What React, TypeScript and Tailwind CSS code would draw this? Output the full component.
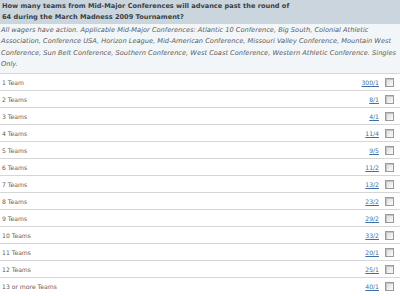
const rows: { label: string; odds: string }[] = [
  { label: "1 Team", odds: "300/1" },
  { label: "2 Teams", odds: "8/1" },
  { label: "3 Teams", odds: "4/1" },
  { label: "4 Teams", odds: "11/4" },
  { label: "5 Teams", odds: "9/5" },
  { label: "6 Teams", odds: "11/2" },
  { label: "7 Teams", odds: "13/2" },
  { label: "8 Teams", odds: "23/2" },
  { label: "9 Teams", odds: "29/2" },
  { label: "10 Teams", odds: "33/2" },
  { label: "11 Teams", odds: "20/1" },
  { label: "12 Teams", odds: "25/1" },
  { label: "13 or more Teams", odds: "40/1" },
];

function Checkbox() {
  return (
    <span className="block w-[9px] h-[9px] border border-[#9a9a9a] bg-gradient-to-br from-[#dcdcdc] to-[#fbfbfb] shadow-[inset_1px_1px_0_#c4c4c4]" />
  );
}

export default function App() {
  return (
    <div className="w-[400px] h-[296px] overflow-hidden bg-white font-['DejaVu_Sans',Verdana,sans-serif]">
      {/* titolo */}
      <div className="bg-[#cbd5de] h-[24px] pl-[2px] pt-[1px] text-[6.6px] leading-[11px] font-bold text-[#3b3f44]">
        <div className="whitespace-nowrap">
          How many teams from Mid-Major Conferences will advance past the round of
        </div>
        <div className="whitespace-nowrap">64 during the March Madness 2009 Tournament?</div>
      </div>

      {/* descrizione */}
      <div className="bg-[#f2f6f9] h-[49px] pl-[1px] pt-[1px] text-[6.65px] leading-[11.3px] italic text-[#5a5a5a]">
        <div className="whitespace-nowrap">
          All wagers have action. Applicable Mid-Major Conferences: Atlantic 10 Conference, Big South, Colonial Athletic
        </div>
        <div className="whitespace-nowrap">
          Association, Conference USA, Horizon League, Mid-American Conference, Missouri Valley Conference, Mountain West
        </div>
        <div className="whitespace-nowrap">
          Conference, Sun Belt Conference, Southern Conference, West Coast Conference, Western Athletic Conference. Singles
        </div>
        <div>Only.</div>
      </div>

      {/* righe */}
      <div className="flex flex-col">
        {rows.map((r) => (
          <div
            key={r.label}
            className="h-[17px] border-t border-[#d6d6d6] flex items-center pl-[2px] pr-[6px] text-[6.1px] text-[#606060]"
          >
            <span className="grow pt-[1px]">{r.label}</span>
            <a href="#" className="text-[#3f6fa3] underline pt-[1px]">
              {r.odds}
            </a>
            <span className="ml-[6px]">
              <Checkbox />
            </span>
          </div>
        ))}
      </div>
    </div>
  );
}
